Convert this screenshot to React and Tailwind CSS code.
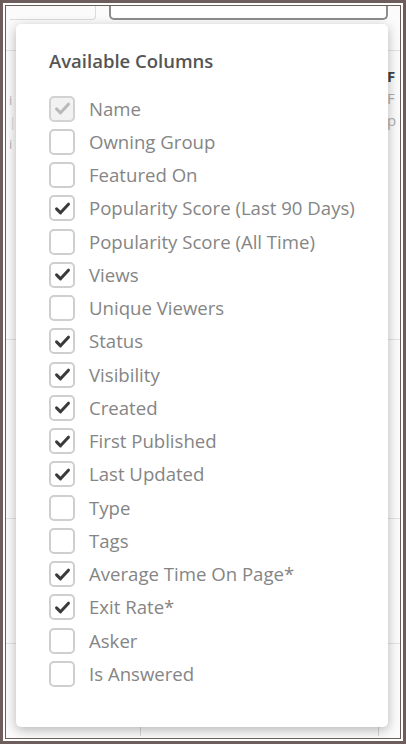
import React from "react";

const COLUMNS = [
  { label: "Name", checked: true, disabled: true },
  { label: "Owning Group", checked: false },
  { label: "Featured On", checked: false },
  { label: "Popularity Score (Last 90 Days)", checked: true },
  { label: "Popularity Score (All Time)", checked: false },
  { label: "Views", checked: true },
  { label: "Unique Viewers", checked: false },
  { label: "Status", checked: true },
  { label: "Visibility", checked: true },
  { label: "Created", checked: true },
  { label: "First Published", checked: true },
  { label: "Last Updated", checked: true },
  { label: "Type", checked: false },
  { label: "Tags", checked: false },
  { label: "Average Time On Page*", checked: true },
  { label: "Exit Rate*", checked: true },
  { label: "Asker", checked: false },
  { label: "Is Answered", checked: false },
];

function CheckBox({ checked, disabled }) {
  return (
    <span
      className={`flex h-[26px] w-[26px] shrink-0 items-center justify-center rounded-[5px] border-2 ${
        disabled ? "border-[#d2d2d2] bg-[#f2f2f2]" : "border-[#cfcfcf] bg-white"
      }`}
    >
      {checked && (
        <svg width="19" height="19" viewBox="0 0 24 24" fill="none">
          <path
            d="M4.5 12.5 L9.5 17.5 L19.5 6.5"
            stroke={disabled ? "#b9b9b9" : "#3a3a3a"}
            strokeWidth="3.8"
            strokeLinecap="round"
            strokeLinejoin="round"
          />
        </svg>
      )}
    </span>
  );
}

const App = () => {
  return (
    <div className="h-[744px] w-[406px] border-[3px] border-[#6e5e5b] bg-white p-[2px]" style={{ fontFamily: '"Open Sans", "Liberation Sans", sans-serif' }}>
      <div className="h-full w-full border border-[#6e5e5b]">
        <div className="relative flex h-full w-full flex-col overflow-hidden bg-[#fbfbfb]">
          {/* background page */}
          <div className="flex h-[14px] shrink-0">
            <div className="ml-[4px] w-[86px] rounded-br-[4px] border-b border-r border-[#dcdcdc]" />
            <div className="ml-[13px] w-[279px] rounded-b-[5px] border-2 border-t-0 border-[#8d8d8d] bg-white" />
          </div>
          <div className="mt-[30px] flex h-[289px] shrink-0 border-t border-[#e3e3e3]">
            <div className="pl-[3px] pt-[38px] text-[13px] leading-[22px] text-[#b5b5b5]">
              <div>i</div>
              <div className="text-[#d8d8d8]">|</div>
              <div>i</div>
            </div>
            <div className="ml-auto w-[16px] overflow-hidden pl-[3px] pt-[14px] text-[15px] leading-[22px]">
              <div className="font-bold text-[#444]">F</div>
              <div className="text-[#b0b0b0]">F</div>
              <div className="text-[#b0b0b0]">p</div>
            </div>
          </div>
          <div className="h-[179px] shrink-0 border-t border-[#e3e3e3]" />
          <div className="h-[125px] shrink-0 border-t border-[#e3e3e3]" />
          <div className="h-[82px] shrink-0 border-t border-[#e3e3e3]">
            <div className="mt-[78px] flex">
              <div className="ml-[134px] h-[14px] border-l border-[#d6d6d6]" />
              <div className="ml-[237px] h-[14px] border-l border-[#d6d6d6]" />
            </div>
          </div>

          {/* popover */}
          <div className="absolute left-[10px] top-[18px] w-[372px] rounded-[5px] bg-white pb-[36px] pl-[33px] pt-[24px] shadow-[0_3px_12px_rgba(0,0,0,0.28)]">
            <h2 className="text-[18.5px] font-semibold leading-[25px] text-[#555]">Available Columns</h2>
            <div className="mt-[19px] flex flex-col">
              {COLUMNS.map((c) => (
                <label key={c.label} className="flex h-[33.25px] items-center gap-[14px]">
                  <CheckBox checked={c.checked} disabled={c.disabled} />
                  <span className="text-[18.6px] leading-[24px] text-[#858585]">{c.label}</span>
                </label>
              ))}
            </div>
          </div>
        </div>
      </div>
    </div>
  );
};

export default App;
